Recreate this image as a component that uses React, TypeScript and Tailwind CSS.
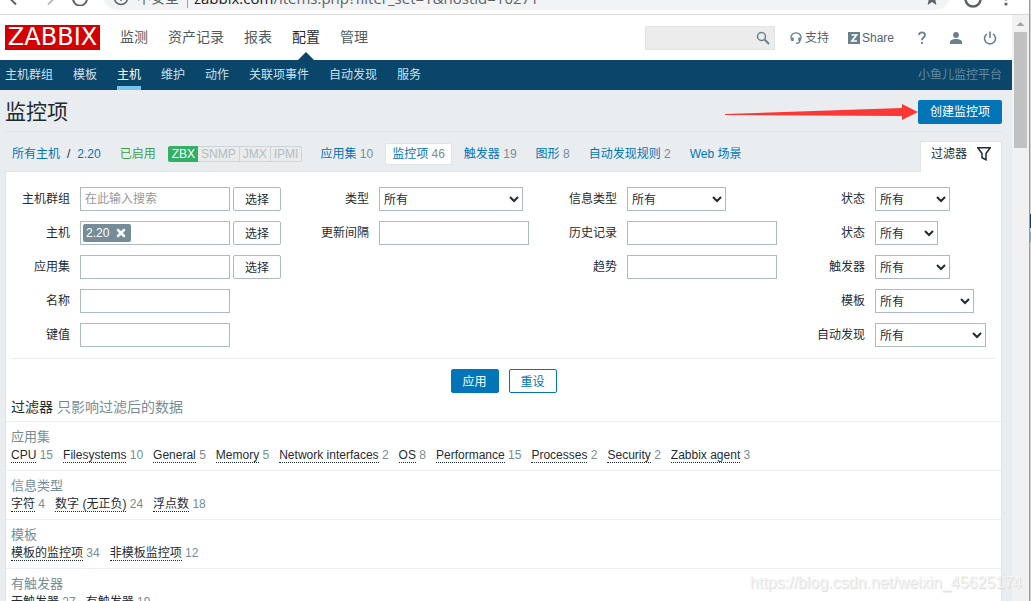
import React from 'react';
import { X } from 'lucide-react';

type Count = { label: string; count?: number };

const mainNav = ['监测', '资产记录', '报表', '配置', '管理'];
const subNav = ['主机群组', '模板', '主机', '维护', '动作', '关联项事件', '自动发现', '服务'];

const hostTabs: Count[] = [
  { label: '应用集', count: 10 },
  { label: '监控项', count: 46 },
  { label: '触发器', count: 19 },
  { label: '图形', count: 8 },
  { label: '自动发现规则', count: 2 },
  { label: 'Web 场景' },
];

const subfilters: { title: string; items: Count[] }[] = [
  {
    title: '应用集',
    items: [
      { label: 'CPU', count: 15 },
      { label: 'Filesystems', count: 10 },
      { label: 'General', count: 5 },
      { label: 'Memory', count: 5 },
      { label: 'Network interfaces', count: 2 },
      { label: 'OS', count: 8 },
      { label: 'Performance', count: 15 },
      { label: 'Processes', count: 2 },
      { label: 'Security', count: 2 },
      { label: 'Zabbix agent', count: 3 },
    ],
  },
  {
    title: '信息类型',
    items: [
      { label: '字符', count: 4 },
      { label: '数字 (无正负)', count: 24 },
      { label: '浮点数', count: 18 },
    ],
  },
  {
    title: '模板',
    items: [
      { label: '模板的监控项', count: 34 },
      { label: '非模板监控项', count: 12 },
    ],
  },
  {
    title: '有触发器',
    items: [
      { label: '无触发器', count: 27 },
      { label: '有触发器', count: 19 },
    ],
  },
];

function BrowserBar() {
  return (
    <div className="flex h-[15px] shrink-0 flex-col justify-end overflow-hidden border-b border-[#d9d9d9] bg-white">
      <div className="mb-1 flex h-7 shrink-0 items-center text-[#5f6368]">
        <div className="flex w-[103px] shrink-0 items-center gap-4 pt-1 pl-2">
          <svg className="h-4 w-4" viewBox="0 0 16 16" fill="none" stroke="currentColor" strokeWidth="2">
            <path d="M15 8H2M8 1.5 1.5 8 8 14.5" />
          </svg>
          <svg className="h-4 w-4 text-[#babcbe]" viewBox="0 0 16 16" fill="none" stroke="currentColor" strokeWidth="2">
            <path d="M1 8h13M8 1.5 14.5 8 8 14.5" />
          </svg>
          <svg className="h-4 w-4" viewBox="0 0 16 16" fill="none" stroke="currentColor" strokeWidth="2">
            <path d="M14 5a7 7 0 1 0 1 4M15 1v5h-5" />
          </svg>
        </div>
        <div className="flex h-7 min-w-0 flex-1 items-center rounded-full bg-[#f1f3f4] pt-1 pr-2.5 pl-2.5 text-[14px] leading-5">
          <svg className="h-4 w-4 shrink-0" viewBox="0 0 16 16" fill="none" stroke="currentColor" strokeWidth="1.5">
            <circle cx="8" cy="8" r="6.5" />
            <path d="M8 7v4M8 4.5V6" />
          </svg>
          <span className="ml-2 whitespace-nowrap">不安全</span>
          <span className="mr-1.5 ml-2 h-5 w-px shrink-0 bg-[#9aa0a6]" />
          <span className="flex-1 truncate font-['Open_Sans',sans-serif] text-[15px]">
            <span className="text-[#202124]">zabbix.com</span>/items.php?filter_set=1&amp;hostid=10271
          </span>
          <svg className="h-4 w-4 shrink-0" viewBox="0 0 16 16" fill="currentColor">
            <path d="m8 1 2 5 5 .500-3.700 3.300L12.400 15 8 12l-4.400 3 1.100-5.200L1 6.500 6 6z" />
          </svg>
        </div>
        <div className="flex w-[79px] shrink-0 items-center gap-4 pt-1.5 pl-3.5">
          <svg className="h-[18px] w-[18px]" viewBox="0 0 18 18" fill="none" stroke="currentColor" strokeWidth="2.5">
            <circle cx="9" cy="9" r="7.5" />
          </svg>
          <svg className="h-4 w-4" viewBox="0 0 16 16" fill="currentColor">
            <circle cx="8" cy="3" r="1.6" />
            <circle cx="8" cy="8" r="1.6" />
            <circle cx="8" cy="13" r="1.6" />
          </svg>
        </div>
      </div>
    </div>
  );
}

function Header() {
  return (
    <header className="flex h-[45px] shrink-0 items-stretch bg-white pr-[15px] pl-[5px]">
      <a
        href="#"
        className="mt-2.5 flex h-[25px] w-[95px] items-center justify-center bg-[#d40000] font-['DejaVu_Sans',sans-serif] text-[24px] leading-[25px] text-white"
      >
        ZABBIX
      </a>
      <nav className="ml-5 flex gap-5 text-[14px] leading-5">
        {mainNav.map((item) => (
          <a
            key={item}
            href="#"
            className={`flex flex-col items-center justify-between pt-3 ${item === '配置' ? 'text-[#1f2c33]' : 'text-[#4f5b62]'}`}
          >
            {item}
            {item === '配置' && (
              <svg className="h-2 w-4" viewBox="0 0 16 8" fill="#0a466a">
                <path d="M0 8 8 0l8 8z" />
              </svg>
            )}
          </a>
        ))}
      </nav>
      <div className="ml-auto flex items-center text-[12px] text-[#4f6570]">
        <div className="flex h-6 w-[130px] items-center border border-[#e3e3e3] bg-[#ececec] pr-1">
          <input aria-label="搜索" className="h-full min-w-0 flex-1 bg-transparent px-1 outline-none" />
          <button aria-label="提交搜索" className="text-[#69808d]">
            <svg className="h-3.5 w-3.5" viewBox="0 0 14 14" fill="none" stroke="currentColor">
              <circle cx="5.5" cy="5.5" r="4" strokeWidth="1.5" />
              <path d="m8.5 8.5 4.5 4.5" strokeWidth="2" />
            </svg>
          </button>
        </div>
        <a href="#" className="ml-[15px] flex items-center gap-[3px]">
          <svg className="h-3 w-3" viewBox="0 0 12 12" fill="none" stroke="#69808d" strokeWidth="1.3">
            <path d="M2 8.5C-.5 5 2 .8 6 .8S12.500 5 10 8.500M10 9c-.5 1.800-1.800 2.400-4 2.400" />
            <path d="M2.700 5.500v3.500M9.300 5.500v3.500" strokeWidth="2" />
          </svg>
          支持
        </a>
        <a href="#" className="ml-[19px] flex items-center gap-0.5">
          <svg className="h-3 w-3" viewBox="0 0 12 12">
            <path fill="#69808d" d="M0 0h12v12H0z" />
            <path d="M3.500 3h5L4 9h5" fill="none" stroke="#fff" strokeWidth="1.7" />
          </svg>
          Share
        </a>
        <a href="#" aria-label="帮助" className="ml-[23px]">
          <svg className="h-3.5 w-2.5" viewBox="0 0 10 14" fill="none" stroke="#69808d" strokeWidth="1.8">
            <path d="M2 4c0-3.500 6-3.500 6 0 0 2.300-3 2.300-3 5.200M5 11v2" />
          </svg>
        </a>
        <a href="#" aria-label="用户" className="ml-[23px]">
          <svg className="h-3 w-3" viewBox="0 0 12 12" fill="#69808d">
            <circle cx="6" cy="3" r="2.9" />
            <path d="M0 12V10c0-2 3-3 6-3s6 1 6 3v2z" />
          </svg>
        </a>
        <a href="#" aria-label="退出" className="ml-[21px]">
          <svg className="h-3.5 w-3.5" viewBox="0 0 14 14" fill="none" stroke="#69808d" strokeWidth="1.6">
            <path d="M4 2.800a5.500 5.500 0 1 0 6 0M7 .5v6.500" />
          </svg>
        </a>
      </div>
    </header>
  );
}

function SubNav() {
  return (
    <nav className="flex h-[30px] shrink-0 justify-between bg-[#0a466a] pr-2.5 pl-[5px] text-[12px] leading-[30px]">
      <div className="flex gap-5">
        {subNav.map((item) => (
          <a
            key={item}
            href="#"
            className={item === '主机' ? 'border-b-4 border-[#78c3f0] text-white' : 'text-[#cfe0ea]'}
          >
            {item}
          </a>
        ))}
      </div>
      <span className="text-[#66899e]">小鱼儿监控平台</span>
    </nav>
  );
}

function Row({ id, label, children }: { id: string; label: string; children: React.ReactNode }) {
  return (
    <>
      <label htmlFor={id} className="text-right">
        {label}
      </label>
      <div className="flex h-6 items-center gap-[3px]">{children}</div>
    </>
  );
}

function TextInput({ id, placeholder }: { id: string; placeholder?: string }) {
  return (
    <input
      id={id}
      type="text"
      placeholder={placeholder}
      className="h-6 w-[150px] border border-[#acbbc2] bg-white px-1 outline-none placeholder:text-[#999999]"
    />
  );
}

function Select({ id, width }: { id: string; width: string }) {
  return (
    <select id={id} className={`h-6 border border-[#acbbc2] bg-white pt-0.5 text-[#1f2c33] ${width}`}>
      <option>所有</option>
    </select>
  );
}

function PickButton() {
  return <button className="h-6 w-12 rounded-[2px] border border-[#acbbc2] bg-white pt-0.5">选择</button>;
}

const columnClass = 'grid auto-rows-[24px] grid-cols-[auto_auto] content-start items-center gap-x-2.5 gap-y-2.5';

function FilterForm() {
  return (
    <form onSubmit={(e) => e.preventDefault()}>
      <div className="flex justify-between pt-[15px] pr-[15px] pb-[11px] pl-4">
        <div className={columnClass}>
          <Row id="groups" label="主机群组">
            <TextInput id="groups" placeholder="在此输入搜索" />
            <PickButton />
          </Row>
          <Row id="hosts" label="主机">
            <div className="flex h-6 w-[150px] items-center border border-[#acbbc2] pl-0.5">
              <span className="flex h-[18px] shrink-0 items-center gap-1.5 rounded-[2px] bg-[#768d99] pr-1 pl-[3px] text-white">
                2.20
                <button aria-label="移除 2.20">
                  <X className="h-3 w-3" strokeWidth={5} />
                </button>
              </span>
              <input id="hosts" type="text" className="min-w-0 flex-1 outline-none" />
            </div>
            <PickButton />
          </Row>
          <Row id="application" label="应用集">
            <TextInput id="application" />
            <PickButton />
          </Row>
          <Row id="name" label="名称">
            <TextInput id="name" />
          </Row>
          <Row id="key" label="键值">
            <TextInput id="key" />
          </Row>
        </div>
        <div className={columnClass}>
          <Row id="type" label="类型">
            <Select id="type" width="w-36" />
          </Row>
          <Row id="delay" label="更新间隔">
            <TextInput id="delay" />
          </Row>
        </div>
        <div className={columnClass}>
          <Row id="value-type" label="信息类型">
            <Select id="value-type" width="w-[99px]" />
          </Row>
          <Row id="history" label="历史记录">
            <TextInput id="history" />
          </Row>
          <Row id="trends" label="趋势">
            <TextInput id="trends" />
          </Row>
        </div>
        <div className={columnClass}>
          <Row id="state" label="状态">
            <Select id="state" width="w-[75px]" />
          </Row>
          <Row id="status" label="状态">
            <Select id="status" width="w-[63px]" />
          </Row>
          <Row id="with-triggers" label="触发器">
            <Select id="with-triggers" width="w-[75px]" />
          </Row>
          <Row id="templated" label="模板">
            <Select id="templated" width="w-[99px]" />
          </Row>
          <Row id="discovery" label="自动发现">
            <Select id="discovery" width="w-[111px]" />
          </Row>
        </div>
      </div>
      <div className="mx-[5px] flex justify-center gap-2.5 border-t border-[#ebeef0] pt-2.5">
        <button className="h-6 w-12 rounded-[2px] border border-[#0275b8] bg-[#0275b8] pt-0.5 text-white">应用</button>
        <button
          type="reset"
          className="h-6 w-12 rounded-[2px] border border-[#0275b8] bg-white pt-0.5 text-[#0275b8]"
        >
          重设
        </button>
      </div>
    </form>
  );
}

function HostBar() {
  return (
    <div className="flex h-[39px] items-end justify-between">
      <div className="flex h-full items-center pt-1 pl-[7px] text-[#0275b8]">
        <a href="#">所有主机</a>
        <span className="mx-[7px] text-[#1f2c33]">/</span>
        <a href="#">2.20</a>
        <span className="ml-[19px] text-[#429e47]">已启用</span>
        <span className="ml-3 flex h-4 items-center rounded-[2px] border border-[#ccd5d9] bg-[#ebebeb] leading-[14px] text-[#afbec6]">
          <span className="-my-px -ml-px h-4 rounded-l-[2px] bg-[#34af67] pr-[3px] pl-1 leading-4 text-white">ZBX</span>
          <span className="px-[3px]">SNMP</span>
          <span className="border-l border-[#ccd5d9] px-[3px]">JMX</span>
          <span className="border-l border-[#ccd5d9] px-[3px]">IPMI</span>
        </span>
        <nav className="ml-[11px] flex gap-[5px]">
          {hostTabs.map((tab) => (
            <a
              key={tab.label}
              href="#"
              className={`border px-1.5 leading-5 ${
                tab.label === '监控项' ? 'rounded-[2px] border-[#dfe4e7] bg-white' : 'border-transparent'
              }`}
            >
              {tab.label}
              {tab.count !== undefined && <span className="text-[#768d99]"> {tab.count}</span>}
            </a>
          ))}
        </nav>
      </div>
      <button className="relative z-10 -mb-px flex h-[31px] w-[82px] items-center gap-2.5 border border-b-0 border-[#dfe4e7] bg-white pb-1.5 pl-2.5 text-[#1f2c33]">
        过滤器
        <svg className="h-3.5 w-3.5" viewBox="0 0 14 14" fill="none" stroke="currentColor" strokeWidth="1.5">
          <path d="M.8.800h12.400L9 6.500v6.200L5 10.700V6.500z" />
        </svg>
      </button>
    </div>
  );
}

function Scrollbar() {
  return (
    <div className="flex w-[17px] shrink-0 flex-col items-center bg-[#f1f1f1]">
      <svg className="h-[17px] w-[17px]" viewBox="0 0 17 17" fill="#a3a3a3">
        <path d="m4.500 11 4-4 4 4z" />
      </svg>
      <div className="h-[116px] w-[13px] bg-[#c1c1c1]" />
    </div>
  );
}

export default function App() {
  return (
    <div className="relative flex h-screen overflow-hidden bg-white font-['Liberation_Sans','Noto_Sans_CJK_SC',sans-serif] text-[12px] leading-4 text-[#1f2c33]">
      <div className="flex min-w-0 flex-1 flex-col">
        <BrowserBar />
        <div className="flex min-h-0 flex-1">
          <div className="flex min-w-0 flex-1 flex-col overflow-hidden bg-[#e9edf0]">
            <Header />
            <SubNav />
            <main className="pr-2.5 pl-[5px]">
              <div className="flex h-[42px] items-center justify-between border-b border-[#dfe4e7] pt-0.5">
                <h1 className="text-[21px] leading-7">监控项</h1>
                <div className="relative">
                  <svg className="absolute top-1 right-full h-4 w-[194px]" viewBox="0 0 194 16" fill="#fb3836">
                    <path d="M1 10 178 4V0l16 8-16 8v-4L1 11z" />
                  </svg>
                  <button className="h-6 rounded-[2px] bg-[#0275b8] px-3 text-white">创建监控项</button>
                </div>
              </div>
              <HostBar />
              <div className="border border-[#dfe4e7] bg-white">
                <FilterForm />
                <h3 className="px-[5px] pt-1 pb-1 text-[14px] leading-5">
                  过滤器 <span className="text-[#768d99]">只影响过滤后的数据</span>
                </h3>
                {subfilters.map((group) => (
                  <section key={group.title} className="h-[49px] border-t border-[#ebeef0] px-[5px] pt-[7px]">
                    <h4 className="text-[13px] leading-4 text-[#768d99]">{group.title}</h4>
                    <ul className="flex gap-2.5 pt-[3px] leading-[15px]">
                      {group.items.map((item) => (
                        <li key={item.label} className="whitespace-nowrap">
                          <a href="#" className="inline-block h-[15px] border-b border-dotted border-[#1f2c33]">
                            {item.label}
                          </a>{' '}
                          <span className="text-[#768d99]">{item.count}</span>
                        </li>
                      ))}
                    </ul>
                  </section>
                ))}
              </div>
            </main>
          </div>
          <Scrollbar />
        </div>
      </div>
      {/* Edge of the window behind */}
      <div className="flex w-0.5 shrink-0 flex-col border-l border-[#999999] bg-[#d5d5d5]">
        <div className="mt-[214px] h-3.5 bg-[#0a466a]" />
        <div className="mt-1 h-2.5 bg-[#78a9c8]" />
      </div>
      <span className="absolute right-[9px] bottom-2 text-[16px] leading-5 text-[#f4f4f4] [text-shadow:1px_1px_1px_#d8d8d8]">
        https://blog.csdn.net/weixin_45625174
      </span>
    </div>
  );
}
